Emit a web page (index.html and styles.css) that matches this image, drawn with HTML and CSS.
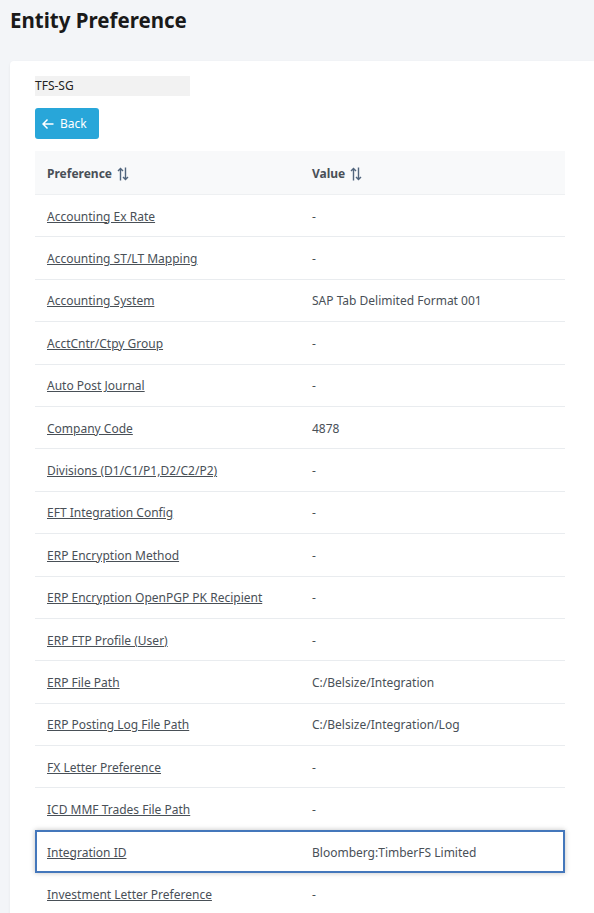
FILE: index.html
```html
<!DOCTYPE html>
<html>
<head>
<meta charset="utf-8">
<link rel="stylesheet" href="styles.css">
</head>
<body>
<h1 class="page-title">Entity Preference</h1>
<div class="card">
  <div class="entity-field">TFS-SG</div>
  <button class="btn-back">
    <svg class="back-icon" viewBox="0 0 12 12" width="12" height="12"><path d="M11.5 6H1.2M5.5 1.5L1 6l4.5 4.5" fill="none" stroke="#fff" stroke-width="1.5"/></svg>
    <span>Back</span>
  </button>
  <table class="pref-table">
    <thead>
      <tr>
        <th>Preference <svg class="sort" viewBox="0 0 12 14" width="12" height="14"><path d="M3.5 13.5V1.5M1 4L3.5 1.5 6 4M8.5 0.5v12M6 10l2.5 2.5L11 10" fill="none" stroke="#51657d" stroke-width="1.4"/></svg></th>
        <th>Value <svg class="sort" viewBox="0 0 12 14" width="12" height="14"><path d="M3.5 13.5V1.5M1 4L3.5 1.5 6 4M8.5 0.5v12M6 10l2.5 2.5L11 10" fill="none" stroke="#51657d" stroke-width="1.4"/></svg></th>
      </tr>
    </thead>
    <tbody>
      <tr><td><a href="#">Accounting Ex Rate</a></td><td>-</td></tr>
      <tr><td><a href="#">Accounting ST/LT Mapping</a></td><td>-</td></tr>
      <tr><td><a href="#">Accounting System</a></td><td>SAP Tab Delimited Format 001</td></tr>
      <tr><td><a href="#">AcctCntr/Ctpy Group</a></td><td>-</td></tr>
      <tr><td><a href="#">Auto Post Journal</a></td><td>-</td></tr>
      <tr><td><a href="#">Company Code</a></td><td>4878</td></tr>
      <tr><td><a href="#">Divisions (D1/C1/P1,D2/C2/P2)</a></td><td>-</td></tr>
      <tr><td><a href="#">EFT Integration Config</a></td><td>-</td></tr>
      <tr><td><a href="#">ERP Encryption Method</a></td><td>-</td></tr>
      <tr><td><a href="#">ERP Encryption OpenPGP PK Recipient</a></td><td>-</td></tr>
      <tr><td><a href="#">ERP FTP Profile (User)</a></td><td>-</td></tr>
      <tr><td><a href="#">ERP File Path</a></td><td>C:/Belsize/Integration</td></tr>
      <tr><td><a href="#">ERP Posting Log File Path</a></td><td>C:/Belsize/Integration/Log</td></tr>
      <tr><td><a href="#">FX Letter Preference</a></td><td>-</td></tr>
      <tr><td><a href="#">ICD MMF Trades File Path</a></td><td>-</td></tr>
      <tr class="selected"><td><a href="#">Integration ID</a></td><td>Bloomberg:TimberFS Limited</td></tr>
      <tr><td><a href="#">Investment Letter Preference</a></td><td>-</td></tr>
    </tbody>
  </table>
</div>
</body>
</html>
```
FILE: styles.css
```css
html, body {
  margin: 0;
  padding: 0;
  background: #f3f5f8;
  font-family: "Noto Sans", "Open Sans", sans-serif;
  color: #495057;
  font-size: 12px;
  overflow: hidden;
}
.page-title {
  margin: 0;
  padding: 5px 10px 0;
  font-size: 20.5px;
  font-weight: 700;
  color: #1a1a1a;
  line-height: 30px;
  height: 56px;
}
.card {
  margin-left: 10px;
  background: #fff;
  border-radius: 4px 0 0 0;
  box-shadow: 0 1px 3px rgba(0,0,0,0.06);
  padding: 15px 29px 20px 25px;
  min-height: 852px;
}
.entity-field {
  width: 155px;
  height: 20px;
  line-height: 20px;
  background: #f2f2f2;
  color: #222;
  font-size: 12px;
}
.btn-back {
  margin-top: 12px;
  display: flex;
  align-items: center;
  gap: 6px;
  width: 64px;
  height: 31px;
  padding: 0 0 0 7px;
  border: none;
  border-radius: 3px;
  background: #28a6d9;
  color: #fff;
  font-family: inherit;
  font-size: 12px;
}
.pref-table {
  margin-top: 12px;
  width: 530px;
  border-collapse: collapse;
  table-layout: fixed;
}
.pref-table th {
  background: #f8f9fa;
  height: 41px;
  padding: 2px 12px 0;
  text-align: left;
  font-weight: 700;
  color: #495057;
  font-size: 12px;
  border-bottom: 1px solid #eef0f2;
}
.sort {
  vertical-align: -3px;
  margin-left: 2px;
}
.pref-table td {
  height: 40.4px;
  padding: 1px 12px 0;
  border-bottom: 1px solid #e9ecef;
  font-size: 12px;
  color: #495057;
}
.pref-table td a {
  color: #495057;
  text-decoration: underline;
}
.pref-table tr.selected {
  outline: 2px solid #4477bb;
  outline-offset: -2px;
  box-shadow: 0 0 5px rgba(0,0,0,0.25);
}
```
